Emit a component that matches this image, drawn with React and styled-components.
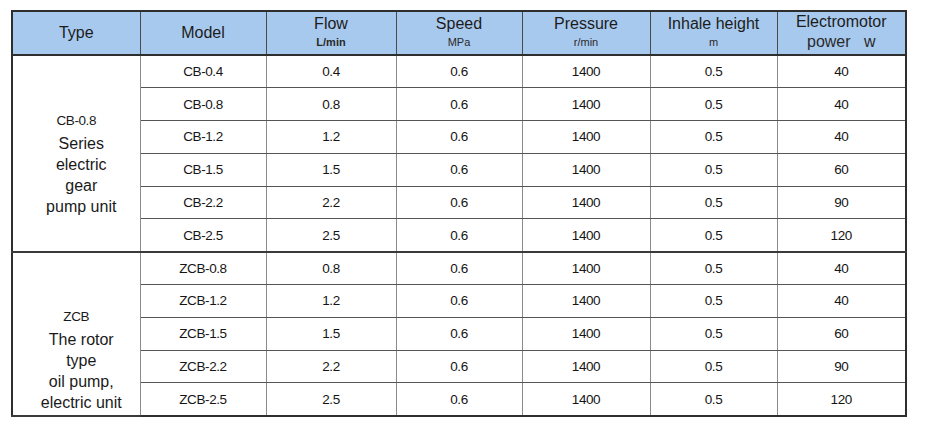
import React from 'react';
import styled, { createGlobalStyle } from 'styled-components';

const GlobalStyle = createGlobalStyle`
  body {
    margin: 0;
    background: #ffffff;
    font-family: "Liberation Sans", Arial, sans-serif;
    color: #1a1a1a;
  }
`;

const groups = [
  {
    code: 'CB-0.8',
    lines: ['Series', 'electric', 'gear', 'pump unit'],
    top: 57,
    rows: [
      ['CB-0.4', '0.4', '0.6', '1400', '0.5', '40'],
      ['CB-0.8', '0.8', '0.6', '1400', '0.5', '40'],
      ['CB-1.2', '1.2', '0.6', '1400', '0.5', '40'],
      ['CB-1.5', '1.5', '0.6', '1400', '0.5', '60'],
      ['CB-2.2', '2.2', '0.6', '1400', '0.5', '90'],
      ['CB-2.5', '2.5', '0.6', '1400', '0.5', '120'],
    ],
  },
  {
    code: 'ZCB',
    lines: ['The rotor', 'type', 'oil pump,', 'electric unit'],
    top: 56,
    rows: [
      ['ZCB-0.8', '0.8', '0.6', '1400', '0.5', '40'],
      ['ZCB-1.2', '1.2', '0.6', '1400', '0.5', '40'],
      ['ZCB-1.5', '1.5', '0.6', '1400', '0.5', '60'],
      ['ZCB-2.2', '2.2', '0.6', '1400', '0.5', '90'],
      ['ZCB-2.5', '2.5', '0.6', '1400', '0.5', '120'],
    ],
  },
];

const colWidths = [128, 126, 130, 126, 128, 127, 129];

const headers = [
  { title: 'Type' },
  { title: 'Model' },
  { title: 'Flow', unit: 'L/min', bold: true },
  { title: 'Speed', unit: 'MPa' },
  { title: 'Pressure', unit: 'r/min' },
  { title: 'Inhale height', unit: 'm' },
  { title: 'Electromotor', unit: 'power   w', big: true },
];

const App = () => (
  <Page>
    <GlobalStyle />
    <Table>
      <colgroup>
        {colWidths.map((w, i) => (
          <Col key={i} $w={w} />
        ))}
      </colgroup>
      <thead>
        <tr>
          {headers.map(h => (
            <HeadCell key={h.title}>
              {h.unit ? (
                <>
                  <HeadTitle>{h.title}</HeadTitle>
                  <HeadUnit $bold={h.bold} $big={h.big}>
                    {h.unit}
                  </HeadUnit>
                </>
              ) : (
                <HeadSingle>{h.title}</HeadSingle>
              )}
            </HeadCell>
          ))}
        </tr>
      </thead>
      {groups.map(g => (
        <GroupBody key={g.code}>
          {g.rows.map((row, i) => (
            <Row key={row[0]}>
              {i === 0 && (
                <TypeCell rowSpan={g.rows.length} $top={g.top}>
                  <TypeCode>{g.code}</TypeCode>
                  {g.lines.map(line => (
                    <TypeLine key={line}>{line}</TypeLine>
                  ))}
                </TypeCell>
              )}
              {row.map((v, j) => (
                <Cell key={j}>{v}</Cell>
              ))}
            </Row>
          ))}
        </GroupBody>
      ))}
    </Table>
  </Page>
);

const Page = styled.div`
  padding: 10px 0 0 11px;
`;

const Table = styled.table`
  border-collapse: collapse;
  table-layout: fixed;
  width: 894px;
  border: 2px solid #2e2e2e;
`;

const Col = styled.col`
  width: ${p => p.$w}px;
`;

const HeadCell = styled.th`
  height: 42px;
  padding: 0;
  background: #a8c9ee;
  border-left: 1px solid #4a4a4a;
  border-bottom: 2px solid #2e2e2e;
  font-weight: 400;
  text-align: center;
  vertical-align: middle;
  color: #1c1c1c;
`;

const HeadSingle = styled.div`
  font-size: 16px;
`;

const HeadTitle = styled.div`
  font-size: 16px;
  line-height: 18px;
  margin-top: -3px;
`;

const HeadUnit = styled.div`
  font-size: ${p => (p.$big ? '16px' : '11px')};
  line-height: ${p => (p.$big ? '19px' : '14px')};
  font-weight: ${p => (p.$bold ? 700 : 400)};
  white-space: pre;
  margin-top: ${p => (p.$big ? '1px' : '2px')};
  color: #2a2a2a;
`;

const GroupBody = styled.tbody`
  border-top: 2px solid #3a3a3a;
`;

const Row = styled.tr`
  height: 32.8px;
`;

const Cell = styled.td`
  padding: 0;
  border-left: 1px solid #8a8a8a;
  border-bottom: 1px solid #555;
  text-align: center;
  vertical-align: middle;
  font-size: 13.5px;
  letter-spacing: -0.4px;
  color: #151515;
`;

const TypeCell = styled.td`
  padding: ${p => p.$top}px 0 0 0;
  vertical-align: top;
  text-align: center;
  border-bottom: 2px solid #3a3a3a;
  border-right: 1px solid #8a8a8a;
`;

const TypeCode = styled.div`
  font-size: 13.5px;
  line-height: 16px;
  letter-spacing: -0.4px;
  margin-bottom: 4px;
`;

const TypeLine = styled.div`
  font-size: 16px;
  line-height: 21px;
  padding-left: 10px;
`;

export default App;
